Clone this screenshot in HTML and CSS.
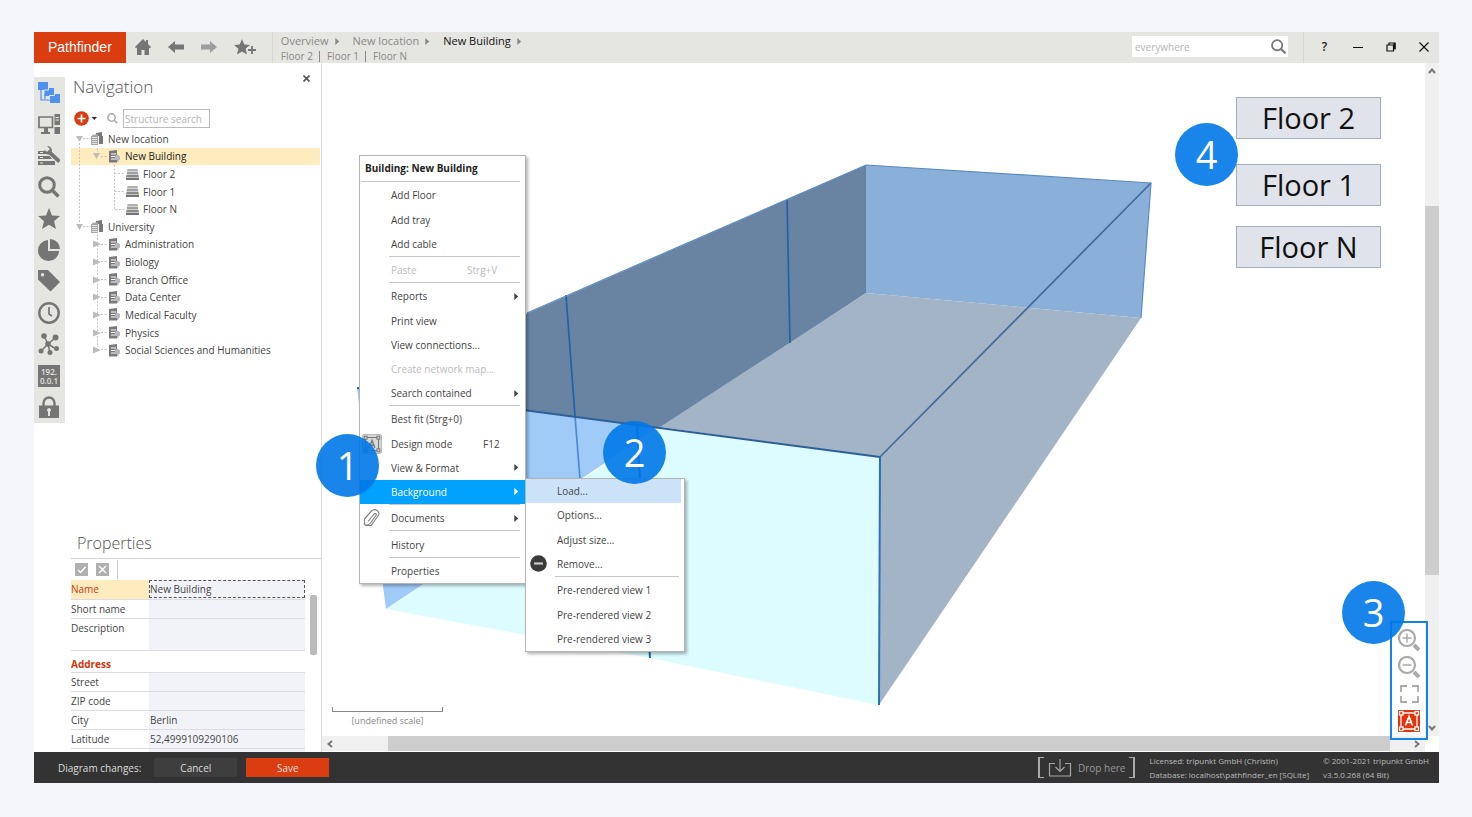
FILE: index.html
```html
<!DOCTYPE html>
<html lang="en">
<head>
<meta charset="utf-8">
<title>Pathfinder</title>
<link rel="stylesheet" href="styles.css">
</head>
<body>
<svg class="defs" width="0" height="0" aria-hidden="true">
  <symbol id="i-location" viewBox="0 0 13 13"><path fill="#777" d="M5 1l6-1v4h1v8H8V4H5z"/><path fill="#a5a5a5" d="M1 3l6-1v11H0V4h1z"/><path stroke="#fff" d="M1 5.500h5M1 7.500h5M1 9.500h5M1 11.500h5" stroke-width=".7"/></symbol>
  <symbol id="i-building" viewBox="0 0 13 13"><path fill="#7a7a7a" d="M1 1l8-1v12.500H1z"/><path stroke="#fff" d="M3 4h5M3 6.500h4M3 9h4" stroke-width="1"/><path fill="#b9b9bd" d="M9 4.500l3 1.500v3.500l-1.500 1V12H9v-2H7V6z"/></symbol>
  <symbol id="i-floor" viewBox="0 0 13 13"><path fill="#b0b0b0" d="M1.500 1h10l.5 2.500H1z"/><path fill="#a0a0a0" d="M1 4h11l.5 2.500H.5z"/><path fill="#8a8a8a" d="M.5 7h12L13 9.500H0z"/><path fill="#757575" d="M0 10h13v2H0z"/></symbol>
  <symbol id="i-down" viewBox="0 0 10 10"><path fill="#bcbcbc" d="M2 2h7L5.500 8z"/></symbol>
  <symbol id="i-right" viewBox="0 0 10 10"><path fill="#bcbcbc" d="M2 1.500L10 5 2 8.500z"/></symbol>
  <symbol id="i-sub" viewBox="0 0 5 8"><path fill="currentColor" d="M0 0l4.500 4L0 8z"/></symbol>
  <symbol id="i-search" viewBox="0 0 22 22"><circle cx="9" cy="9" r="7.300" fill="none" stroke="currentColor" stroke-width="3"/><path stroke="currentColor" stroke-width="3.500" d="M14.500 14.500l6 6"/></symbol>
  <symbol id="i-design" viewBox="0 0 22 22"><g fill="none" stroke="currentColor" stroke-width="1.300"><path d="M5 3h12M5 19h12M3 5v12M19 5v12"/><rect x="1.500" y="1.500" width="3.500" height="3.500"/><rect x="17" y="1.500" width="3.500" height="3.500"/><rect x="1.500" y="17" width="3.500" height="3.500"/><rect x="17" y="17" width="3.500" height="3.500"/><path d="M7.500 15.500L11 6.500l3.500 9M8.800 12.500h4.400" stroke-width="1.700"/></g></symbol>
</svg>
<div class="window">
  <header class="topbar">
    <a class="brand" href="#">Pathfinder</a>
    <nav class="tools" aria-label="History">
      <button aria-label="Home"><svg width="16" height="16" viewBox="0 0 16 16"><path fill="#757575" d="M8 0L0 8l1 1.500 1-1V16h4.500v-5h3v5H14V8.500l1 1L16 8l-3-3V1h-2v2z"/></svg></button>
      <button aria-label="Back"><svg width="16" height="12" viewBox="0 0 16 12"><path fill="#757575" d="M0 6l7-6v3.500h9v5H7V12z"/></svg></button>
      <button aria-label="Forward"><svg width="16" height="12" viewBox="0 0 16 12"><path fill="#9e9e9e" d="M16 6L9 0v3.500H0v5h9V12z"/></svg></button>
      <button aria-label="Add favourite"><svg width="22" height="16" viewBox="0 0 22 16"><path fill="#757575" d="M8 0l2.300 5.500 5.700.5-4.400 3.800L13 15.500l-5-3-5 3 1.400-5.700L0 6l5.700-.5z"/><path stroke="#e5e5e1" stroke-width="4" d="M18 5.500v10M13 10.500h9"/><path stroke="#757575" stroke-width="1.800" d="M18 7v8M14 11h8"/></svg></button>
    </nav>
    <nav class="crumbs" aria-label="Breadcrumb">
      <div class="path"><a href="#">Overview</a><svg><use href="#i-sub"/></svg><a href="#">New location</a><svg><use href="#i-sub"/></svg><a class="current" href="#">New Building</a><svg><use href="#i-sub"/></svg></div>
      <div class="siblings"><a href="#">Floor 2</a><a href="#">Floor 1</a><a href="#">Floor N</a></div>
    </nav>
    <label class="search"><input type="text" placeholder="everywhere" aria-label="Search everywhere"><svg width="15" height="15" viewBox="0 0 22 22"><circle cx="9" cy="9" r="7.500" fill="none" stroke="#777" stroke-width="2.600"/><path stroke="#777" stroke-width="3.200" d="M14.500 14.500l7 6.500"/></svg></label>
    <div class="controls">
      <button class="help">?</button>
      <button aria-label="Minimise"><svg width="10" height="10"><path stroke="#111" d="M0 5.500h10"/></svg></button>
      <button aria-label="Restore"><svg width="10" height="10"><path fill="none" stroke="#111" stroke-width="1.200" d="M1 3h6.500v6H1zM3 3V1h6v6H7.500"/><path fill="#111" d="M7.500 1h2v6h-2z"/></svg></button>
      <button aria-label="Close"><svg width="10" height="10"><path stroke="#111" stroke-width="1.200" d="M.5.500l9 9M9.500.500l-9 9"/></svg></button>
    </div>
  </header>

  <div class="workspace">
    <nav class="rail" aria-label="Views">
      <button aria-label="Structure"><svg viewBox="0 0 22 22"><path fill="#4f92ee" d="M0 0h10v8H0zM6.500 7H10V6h6v8H6.500zM12 13l2-1h8v9H12z"/><path stroke="#4f92ee" stroke-width="1.200" fill="none" d="M3 8v10h9M7 12v5"/><path stroke="#e5e5e1" fill="none" d="M10.500 3v5H6M16.500 10v3.500h-5v4"/></svg></button>
      <button aria-label="Devices"><svg viewBox="0 0 22 22"><path fill="none" stroke="#757575" stroke-width="1.700" d="M1 4h13.500v10.500H1z"/><path fill="#757575" d="M6 15h4v4h2v2H3v-2h3zM16.500 1H22v11h-5.500zM16.500 14H22v7h-5.500z"/><path stroke="#e5e5e1" d="M17.500 4.500h3.500M17.500 7h3.500"/></svg></button>
      <button aria-label="Maintenance"><svg viewBox="0 0 22 22"><path fill="#757575" d="M0 6h8l2 3H0zM0 11h12l2 3H0zM0 16h17v4H0z"/><path stroke="#e5e5e1" d="M2 7.500h3M2 12.500h3M2 18h3"/><path stroke="#e5e5e1" stroke-width="5.500" d="M10 6l12 11"/><path stroke="#757575" stroke-width="3.800" d="M10 6l11.500 10.500"/><path fill="#757575" d="M9 1l3 3-1 2-2 1-3-2c0 3 2 5 5 4.500L14 6c0-3-2-5-5-5z"/></svg></button>
      <button aria-label="Search"><svg><use href="#i-search" color="#757575"/></svg></button>
      <button aria-label="Favourites"><svg viewBox="0 0 22 22"><path fill="#757575" d="M11 0l3 7.500 8 .5-6 5.200 2 7.800-7-4.300L4 21l2-7.800L0 8l8-.5z"/></svg></button>
      <button aria-label="Statistics"><svg viewBox="0 0 22 22"><path fill="#757575" d="M10 1v11h11A10.500 10.500 0 1 1 10 1z"/><path fill="#757575" d="M12 0a10 10 0 0 1 10 10H12z"/></svg></button>
      <button aria-label="Tags"><svg viewBox="0 0 22 22"><path fill="#757575" fill-rule="evenodd" d="M0 0h10l12 12-9.500 9.500L0 9.500zM4.500 3a1.700 1.700 0 1 0 .1 0z"/></svg></button>
      <button aria-label="History"><svg viewBox="0 0 22 22"><circle cx="11" cy="11" r="9.700" fill="none" stroke="#757575" stroke-width="2.400"/><path fill="none" stroke="#757575" stroke-width="1.700" d="M11 5v7l3 2"/></svg></button>
      <button aria-label="Network"><svg viewBox="0 0 22 22"><path fill="none" stroke="#757575" stroke-width="1.500" d="M6 3l4 8 7-6M10 11l-7 7M10 11l2 9M10 11l8 5"/><g fill="#757575"><circle cx="6" cy="3" r="2.800"/><circle cx="17.500" cy="4.500" r="3"/><circle cx="10" cy="11" r="2.800"/><circle cx="3" cy="18" r="2.500"/><circle cx="12" cy="19.500" r="2.500"/><circle cx="18.500" cy="15.500" r="2.500"/></g></svg></button>
      <button class="ip">192.<br>0.0.1</button>
      <button aria-label="Permissions"><svg viewBox="0 0 22 22"><path fill="none" stroke="#757575" stroke-width="2.400" d="M5.500 10V7a5.500 5.500 0 0 1 11 0v3"/><path fill="#757575" d="M1 9.500h20V22H1z"/><path fill="#e5e5e1" d="M11 12a2 2 0 0 1 1 3.700V20h-2v-4.300A2 2 0 0 1 11 12z"/></svg></button>
    </nav>

    <aside class="side">
      <section class="navigation">
        <div class="side-head"><h2>Navigation</h2><button aria-label="Close navigation"><svg width="7" height="7"><path stroke="#555" stroke-width="1.600" d="M.5.500l6 6M6.500.500l-6 6"/></svg></button></div>
        <div class="side-tools">
          <button class="add" aria-label="Add"><svg width="23" height="15" viewBox="0 0 23 15"><circle cx="7.500" cy="7.500" r="7.300" fill="#d93c10"/><path stroke="#fff" stroke-width="1.700" d="M3.500 7.500h8M7.500 3.500v8"/><path fill="#333" d="M17.500 6H23l-2.700 3z"/></svg></button>
          <svg class="glass" width="11" height="11"><use href="#i-search"/></svg>
          <input type="text" placeholder="Structure search" aria-label="Structure search">
        </div>
        <div class="tree-wrap">
          <svg class="guides" width="60" height="229" aria-hidden="true"><path fill="none" stroke="#c6c6c6" stroke-dasharray="2 1.500" d="M8.500 13v79M12 8.500h8M12 96.500h8M26.500 18v4M30 26.500h7M26.500 101v116M30 114.500h7M30 131.500h7M30 149.500h7M30 167.500h7M30 184.500h7M30 202.500h7M30 219.500h7M43.500 35v44.500h10M43.500 43.500h10M43.500 61.500h10"/></svg>
          <ul class="tree">
            <li class="l0"><svg class="twisty"><use href="#i-down"/></svg><svg><use href="#i-location"/></svg><a href="#">New location</a></li>
            <li class="l1 active"><svg class="twisty"><use href="#i-down"/></svg><svg><use href="#i-building"/></svg><a href="#">New Building</a></li>
            <li class="l2"><svg><use href="#i-floor"/></svg><a href="#">Floor 2</a></li>
            <li class="l2"><svg><use href="#i-floor"/></svg><a href="#">Floor 1</a></li>
            <li class="l2"><svg><use href="#i-floor"/></svg><a href="#">Floor N</a></li>
            <li class="l0"><svg class="twisty"><use href="#i-down"/></svg><svg><use href="#i-location"/></svg><a href="#">University</a></li>
            <li class="l1"><svg class="twisty"><use href="#i-right"/></svg><svg><use href="#i-building"/></svg><a href="#">Administration</a></li>
            <li class="l1"><svg class="twisty"><use href="#i-right"/></svg><svg><use href="#i-building"/></svg><a href="#">Biology</a></li>
            <li class="l1"><svg class="twisty"><use href="#i-right"/></svg><svg><use href="#i-building"/></svg><a href="#">Branch Office</a></li>
            <li class="l1"><svg class="twisty"><use href="#i-right"/></svg><svg><use href="#i-building"/></svg><a href="#">Data Center</a></li>
            <li class="l1"><svg class="twisty"><use href="#i-right"/></svg><svg><use href="#i-building"/></svg><a href="#">Medical Faculty</a></li>
            <li class="l1"><svg class="twisty"><use href="#i-right"/></svg><svg><use href="#i-building"/></svg><a href="#">Physics</a></li>
            <li class="l1"><svg class="twisty"><use href="#i-right"/></svg><svg><use href="#i-building"/></svg><a href="#">Social Sciences and Humanities</a></li>
          </ul>
        </div>
      </section>

      <section class="properties">
        <h2>Properties</h2>
        <div class="prop-tools">
          <button aria-label="Apply"><svg width="13" height="13"><path stroke="#fff" stroke-width="1.500" fill="none" d="M3 7l2.500 2.500L10.500 4"/></svg></button>
          <button aria-label="Discard"><svg width="13" height="13"><path stroke="#fff" stroke-width="1.300" d="M3 3l7 7M10 3l-7 7"/></svg></button>
        </div>
        <div class="prop-body">
          <table>
            <tr class="selected"><th><label for="p1">Name</label></th><td><input id="p1" value="New Building"></td></tr>
            <tr><th><label for="p2">Short name</label></th><td><input id="p2"></td></tr>
            <tr class="tall"><th><label for="p3">Description</label></th><td><textarea id="p3"></textarea></td></tr>
            <tr class="group"><th colspan="2">Address</th></tr>
            <tr><th><label for="p4">Street</label></th><td><input id="p4"></td></tr>
            <tr><th><label for="p5">ZIP code</label></th><td><input id="p5"></td></tr>
            <tr><th><label for="p6">City</label></th><td><input id="p6" value="Berlin"></td></tr>
            <tr><th><label for="p7">Latitude</label></th><td><input id="p7" value="52,4999109290106"></td></tr>
            <tr><th></th><td></td></tr>
          </table>
          <div class="prop-scroll"></div>
        </div>
      </section>
    </aside>

    <main class="canvas">
      <div class="stage">
        <svg class="drawing" viewBox="322 63 1103 673" aria-hidden="true">
          <path fill="#a0caf7" d="M357 388L640 425 662 425 386 609z"/>
          <path fill="#dcfcff" d="M386 609L662 427 880 457 879 705 650 658z"/>
          <path fill="#6984a3" d="M357 388L866 165V293L662 428z"/>
          <path fill="#8ab0d9" d="M866 165L1151 183 1141 318 866 293z"/>
          <path fill="#a4b4c7" d="M866 293L1141 318 879 705 880 457 660 427z"/>
          <g fill="none" stroke="#1f62a6" stroke-width="1.700">
            <path d="M566 295L575 416M787 200L790 343"/>
            <path stroke="#4a8bd2" d="M575 416L580 479"/>
            <path stroke-width="2" d="M637 425L650 658"/>
            <path stroke="#2d5f98" stroke-width="2" d="M357 388L880 457"/>
            <path stroke="#41699b" d="M880 457L1151 183"/>
            <path stroke="#2c70b8" stroke-width="2" d="M880 457L879 705"/>
            <path stroke="#5b8cc4" stroke-width="1.200" d="M527 313L866 165 1151 183 1141 318"/>
          </g>
        </svg>
        <button class="node n2">Floor 2</button>
        <button class="node n1">Floor 1</button>
        <button class="node nn">Floor N</button>
        <div class="scale"><span></span>[undefined scale]</div>
      </div>
      <div class="vbar"><svg width="8" height="6"><path d="M1 5l3-3.500L7 5"/></svg><i></i><b></b><i class="rest"></i><svg width="8" height="6"><path d="M1 1l3 3.500L7 1"/></svg></div>
      <div class="hbar"><svg width="6" height="8"><path d="M5 1L1.500 4 5 7"/></svg><b></b><svg width="6" height="8"><path d="M1 1l3.500 3L1 7"/></svg></div>
    </main>

    <div class="zoomtools">
      <button aria-label="Zoom in"><svg viewBox="0 0 22 22"><g fill="none" stroke="#aaa"><circle cx="9" cy="9" r="8" stroke-width="2.200"/><path stroke-width="1.500" d="M4.500 9h9M9 4.500v9"/><path stroke-width="4" d="M16 16l5 5"/></g></svg></button>
      <button aria-label="Zoom out"><svg viewBox="0 0 22 22"><g fill="none" stroke="#aaa"><circle cx="9" cy="9" r="8" stroke-width="2.200"/><path stroke-width="1.500" d="M4.500 9h9"/><path stroke-width="4" d="M16 16l5 5"/></g></svg></button>
      <button aria-label="Best fit"><svg viewBox="0 0 22 22"><path fill="none" stroke="#aaa" stroke-width="1.800" d="M3 9V3h6M14 3h6v6M20 13v6h-6M9 19H3v-6"/></svg></button>
      <button class="on" aria-label="Design mode"><svg><use href="#i-design"/></svg></button>
    </div>

    <div class="menu context">
      <h3>Building: New Building</h3>
      <hr class="full">
      <button>Add Floor</button>
      <button>Add tray</button>
      <button>Add cable</button>
      <hr>
      <button disabled>Paste<kbd>Strg+V</kbd></button>
      <hr>
      <button>Reports<svg class="more"><use href="#i-sub"/></svg></button>
      <button>Print view</button>
      <button>View connections...</button>
      <button disabled>Create network map...</button>
      <button>Search contained<svg class="more"><use href="#i-sub"/></svg></button>
      <hr>
      <button>Best fit (Strg+0)</button>
      <button><span class="lead pressed"><svg width="18" height="18"><use href="#i-design"/></svg></span>Design mode<kbd>F12</kbd></button>
      <button>View &amp; Format<svg class="more"><use href="#i-sub"/></svg></button>
      <button class="open">Background<svg class="more"><use href="#i-sub"/></svg></button>
      <hr>
      <button><span class="lead"><svg width="18" height="18" viewBox="0 0 18 18"><path fill="none" stroke="#858585" stroke-width="1.200" stroke-linejoin="round" d="M5 12.500l6-7.500c1.200-1.400 3 0 2 1.500L7.500 14c-2 2.500-5 2.500-6 1.500V10L8.500 2c2-2 4-1.500 5.500-.5 2 1.500 2.500 3.500 1 5.500L8 16.500H2"/></svg></span>Documents<svg class="more"><use href="#i-sub"/></svg></button>
      <hr>
      <button>History</button>
      <hr>
      <button>Properties</button>
    </div>
    <div class="menu sub">
      <button class="hover">Load...</button>
      <button>Options...</button>
      <button>Adjust size...</button>
      <button><span class="lead"><svg width="17" height="17"><circle cx="8.500" cy="8.500" r="8.300" fill="#3a3a3a"/><path stroke="#ccc" stroke-width="2.200" d="M4 8.500h9"/></svg></span>Remove...</button>
      <hr>
      <button>Pre-rendered view 1</button>
      <button>Pre-rendered view 2</button>
      <button>Pre-rendered view 3</button>
    </div>

    <div class="callout c1">1</div>
    <div class="callout c2">2</div>
    <div class="callout c3">3</div>
    <div class="callout c4">4</div>
  </div>

  <footer class="statusbar">
    <span class="changes">Diagram changes:</span>
    <button>Cancel</button>
    <button class="save">Save</button>
    <div class="drop"><svg width="24" height="18" viewBox="0 0 24 18"><path fill="none" stroke="#a5a5a5" stroke-width="1.200" d="M7 4.500H1.500V17h21V4.500H17M12 0v12M7.500 8l4.500 4.500L16.500 8"/></svg>Drop here</div>
    <div class="info">Licensed: tripunkt GmbH (Christin)<br>Database: localhost\pathfinder_en [SQLite]</div>
    <div class="info">© 2001-2021 tripunkt GmbH<br>v3.5.0.268 (64 Bit)</div>
  </footer>
</div>
</body>
</html>
```

FILE: styles.css
```css
* { box-sizing: border-box; }

body {
  margin: 0;
  min-height: 100vh;
  display: flex;
  padding: 32px 33px 34px 34px;
  background: #f4f6fb;
  font: 10px "Open Sans", "Noto Sans", sans-serif;
  color: #444;
}

button, input, textarea {
  font: inherit;
  color: inherit;
  border: 0;
  margin: 0;
  padding: 0;
  background: none;
}

a { color: inherit; text-decoration: none; }
h2, h3, ul { margin: 0; padding: 0; font-weight: 400; }
svg { display: block; flex: none; }
.defs { position: absolute; }

.window {
  flex: 1;
  min-width: 0;
  display: flex;
  flex-direction: column;
  background: #fff;
}

/* Top bar */
.topbar {
  flex: none;
  display: flex;
  min-height: 31px;
  background: #e5e5e1;
}
.brand {
  display: flex;
  align-items: center;
  padding: 0 14px 2px;
  background: #da3d10;
  color: #fff;
  font: 14px "Liberation Sans", sans-serif;
}
.tools {
  display: flex;
  padding: 0 0 2px 1px;
  border-right: 1px solid #d8d8d5;
}
.tools button {
  width: 33px;
  display: flex;
  align-items: center;
  justify-content: center;
}
.tools button:last-child { width: 46px; padding-right: 8px; }
.crumbs { padding: 1px 0 0 8px; color: #888; }
.crumbs div { display: flex; align-items: center; }
.path { gap: 6px; font-size: 11px; line-height: 16px; }
.path svg { margin-right: 7px; width: 5px; height: 7px; }
.current { color: #111; }
.siblings { line-height: 14px; }
.siblings a + a { margin-left: 6px; padding-left: 7px; border-left: 1px solid #888; line-height: 11px; }
.search {
  display: flex;
  align-items: center;
  width: 156px;
  margin: 4px 15px 6px auto;
  padding: 0 2px 0 3px;
  background: #fff;
}
.search input { flex: 1; min-width: 0; outline: 0; }
::placeholder { color: #b4b4b4; opacity: 1; }
.controls {
  display: flex;
  padding: 0 0 2px 4px;
  margin-right: -1px;
  border-left: 1px solid #d5d5d2;
}
.controls button {
  width: 33px;
  display: flex;
  align-items: center;
  justify-content: center;
  color: #222;
}
.help { font-size: 12px; font-weight: 600; }

/* Work area */
.workspace {
  position: relative;
  flex: 1;
  min-height: 0;
  display: flex;
}
.rail {
  align-self: flex-start;
  flex: none;
  width: 31px;
  min-height: 346px;
  margin-top: 14px;
  padding-right: 1px;
  display: grid;
  grid-auto-rows: 1fr;
  background: #e5e5e1;
}
.rail button { display: flex; align-items: center; justify-content: center; }
.rail svg { width: 22px; height: 22px; }
.rail .ip {
  display: block;
  place-self: center;
  width: 22px;
  height: 22px;
  background: #757575;
  color: #e5e5e1;
  font: 600 8px/9px "Open Sans", sans-serif;
}

.side {
  flex: none;
  width: 257px;
  display: flex;
  flex-direction: column;
  padding-left: 6px;
  border-right: 1px solid #ddd;
}
.side h2 { font-size: 16px; font-weight: 300; line-height: 22px; color: #555; }
.navigation { flex: 1; }
.side-head { display: flex; justify-content: space-between; align-items: flex-start; padding: 12px 11px 0 2px; }
.side .side-head h2 { font-size: 17px; line-height: 24px; }
.side-tools { display: flex; align-items: center; padding: 10px 0 2px 3px; }
.glass { color: #aaa; margin: 0 5px 0 10px; }
.side-tools input {
  width: 87px;
  height: 19px;
  padding: 0 1px;
  border: 1px solid #bbb;
}

.tree-wrap { position: relative; }
.tree {
  list-style: none;
  display: grid;
  grid-auto-rows: 1fr;
  min-height: 229px;
}
.tree li { display: flex; align-items: center; }
.tree li svg { width: 13px; height: 13px; margin-right: 4px; }
.tree li .twisty { width: 10px; height: 10px; margin-right: 7px; }
.guides { position: absolute; left: 0; top: 0; }
.tree .l0 { padding-left: 3px; }
.tree .l1 { padding-left: 20px; }
.tree .l2 { padding-left: 55px; }
.tree .active { background: #ffecbe; color: #222; margin-right: 1px; }

/* Property sheet */
.properties h2 { padding: 0 6px 4px; border-bottom: 1px solid #d2d2da; }
.prop-tools { display: flex; gap: 8px; padding: 4px; }
.prop-tools button { width: 13px; height: 13px; background: #b0b0b0; }
.prop-tools::after { content: ""; width: 1px; margin: -3px 0; background: #ccc; }
.prop-body { display: flex; gap: 5px; height: 172px; overflow: hidden; align-items: flex-start; }
.prop-body table { width: 234px; border-collapse: collapse; table-layout: fixed; }
.prop-body th { width: 78px; text-align: left; font-weight: 400; }
.prop-body th, .prop-body td { padding: 0; height: 19px; border-bottom: 1px solid #dcdce0; vertical-align: top; line-height: 18px; }
.prop-body td { background: #f2f3f8; }
.prop-body input, .prop-body textarea { display: block; width: 100%; height: 18px; padding: 0 1px; outline: 0; resize: none; }
.prop-body .tall td { height: 32px; }
.prop-body .group th { height: 22px; padding-top: 5px; line-height: 16px; font-weight: 700; color: #d2360f; }
.prop-body .selected th { background: #ffecbe; color: #d2360f; }
.prop-body .selected input { padding: 0; border: 1px dashed #555; line-height: 16px; }
.prop-scroll { width: 7px; height: 60px; margin-top: 15px; border-radius: 2px; background: #bababa; }

/* Canvas */
.canvas {
  flex: 1;
  min-width: 0;
  display: grid;
  grid-template: minmax(0, 1fr) 16px / minmax(0, 1fr) 14px;
}
.stage { position: relative; overflow: hidden; }
.drawing { width: 100%; height: 100%; }
.node {
  position: absolute;
  right: 44px;
  width: 145px;
  height: 42px;
  border: 1px solid #a3afbe;
  background: #e0e3e9;
  color: #111;
  font-size: 29px;
  line-height: 38px;
}
.n2 { top: 34px; }
.n1 { top: 101px; }
.nn { top: 163px; }
.scale {
  position: absolute;
  left: 10px;
  bottom: 8px;
  width: 111px;
  text-align: center;
  font-size: 9px;
  line-height: 15px;
  color: #888;
}
.scale span { display: block; height: 5px; border: 1px solid #888; border-top: 0; margin-bottom: 1px; }
.vbar, .hbar { display: flex; align-items: center; background: #f0f0f0; }
.vbar { flex-direction: column; padding: 5px 0; }
.vbar i { flex: 132; }
.vbar .rest { flex: 150; }
.vbar b { flex: 369; width: 100%; background: #cdcdcd; }
.hbar { padding: 0 5px; gap: 24px; margin-bottom: 1px; }
.hbar b { flex: 1; height: 100%; margin-left: 31px; background: #cdcdcd; }
.vbar path, .hbar path { fill: none; stroke: #777; stroke-width: 2; }

.zoomtools {
  position: absolute;
  right: 11px;
  bottom: 12px;
  width: 38px;
  display: grid;
  gap: 5px;
  padding: 6px;
  border: 2px solid #1584ea;
}
.zoomtools button { width: 22px; height: 22px; }
.zoomtools svg { width: 22px; height: 22px; }
.zoomtools .on { background: #e2330c; color: #fff; }

/* Menus */
.menu {
  position: absolute;
  display: flex;
  flex-direction: column;
  justify-content: space-between;
  background: #fff;
  border: 1px solid #b5b5b5;
  box-shadow: 2px 2px 3px rgba(0, 0, 0, .3);
}
.context { left: 325px; top: 92px; width: 167px; min-height: 429px; }
.sub { left: 491px; top: 415px; width: 160px; min-height: 174px; }
.menu h3 { padding-left: 5px; font-size: 10px; font-weight: 700; line-height: 25px; color: #222; }
.menu hr { width: 131px; height: 1px; margin: 0 5px 1px auto; border: 0; background: #c6c6c6; }
.menu .full { width: 159px; }
.sub hr { width: 124px; }
.menu button {
  position: relative;
  display: flex;
  align-items: center;
  width: 100%;
  height: 24px;
  padding-left: 31px;
  text-align: left;
}
.menu button:disabled { color: #bbb; }
.menu kbd { position: absolute; left: 107px; font: inherit; }
.menu button:not(:disabled) kbd { left: 123px; }
.menu .more { width: 5px; height: 7px; margin-left: auto; margin-right: 6px; }
.menu .open { background: #00a2ff; color: #fff; }
.sub .hover { background: #cce2f8; width: 155px; }
.lead { position: absolute; left: 2px; width: 20px; height: 20px; display: grid; place-items: center; color: #777; }
.pressed { border: 1px solid #bbb; border-radius: 2px; background: #d8d8d8; }

/* Numbered callouts */
.callout {
  position: absolute;
  width: 63px;
  height: 63px;
  border-radius: 50%;
  background: rgba(0, 120, 232, .9);
  color: #fff;
  font-size: 38px;
  line-height: 62px;
  text-align: center;
}
.c1 { left: 282px; top: 371px; }
.c2 { left: 569px; top: 358px; }
.c3 { right: 34px; top: 518px; }
.c4 { right: 201px; top: 60px; }

/* Status bar */
.statusbar {
  flex: none;
  display: flex;
  align-items: center;
  min-height: 31px;
  padding: 0 10px 0 24px;
  background: #333;
  color: #ddd;
}
.changes { margin-right: 13px; }
.statusbar button { width: 83px; height: 19px; background: #3e3e3e; }
.statusbar .save { margin-left: 9px; background: #d93d10; }
.drop {
  margin-left: auto;
  display: flex;
  align-items: center;
  gap: 6px;
  height: 21px;
  padding: 0 10px;
  position: relative;
  color: #999;
}
.drop::before, .drop::after {
  content: "";
  position: absolute;
  top: 0;
  bottom: 0;
  width: 4px;
  border: 1px solid #aaa;
}
.drop::before { left: 0; border-right: 0; border-left-width: 2px; }
.drop::after { right: 0; border-left: 0; border-right-width: 2px; }
.info { margin-left: 14px; font-size: 8px; line-height: 14px; color: #bbb; }
```
